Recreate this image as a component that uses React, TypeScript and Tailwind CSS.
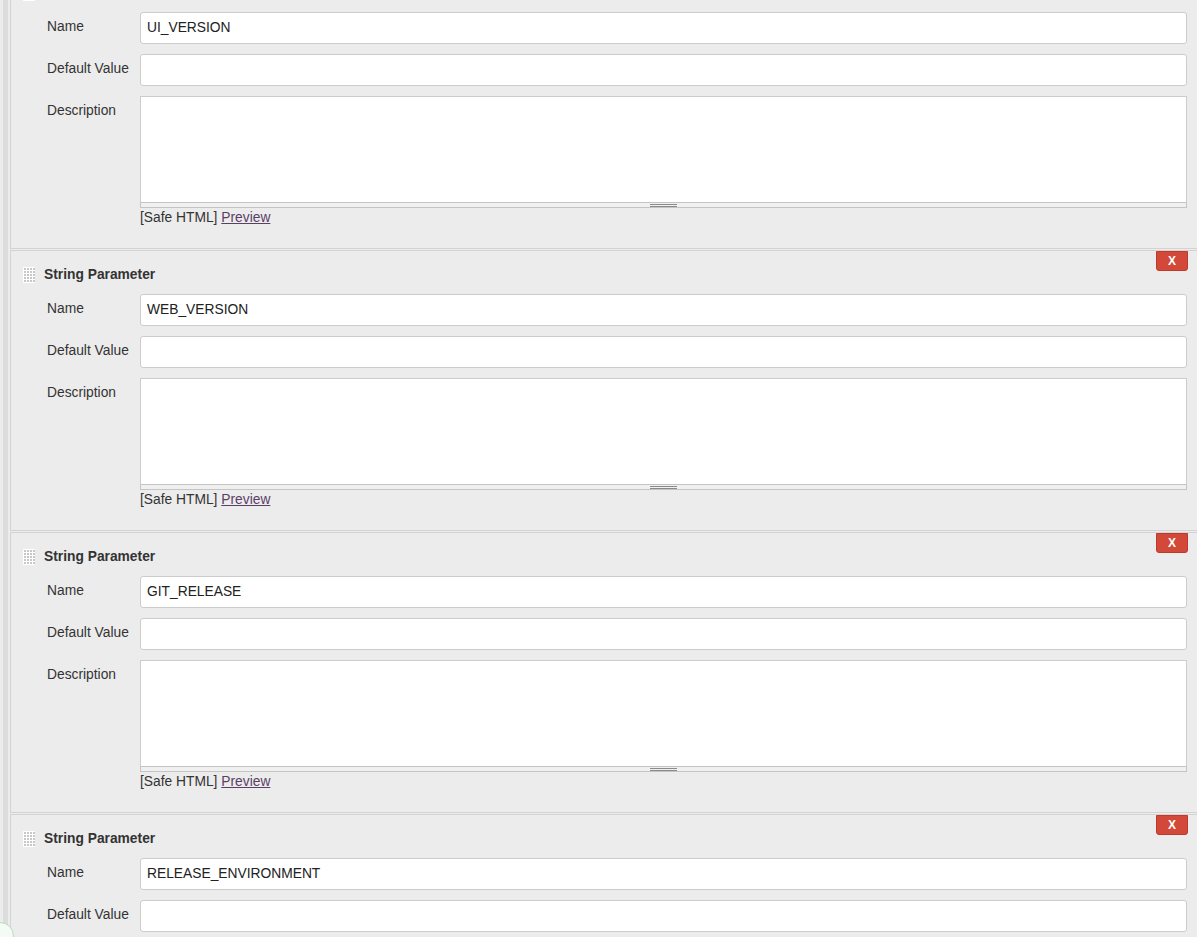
const params = ["UI_VERSION", "WEB_VERSION", "GIT_RELEASE", "RELEASE_ENVIRONMENT"];

const font = "font-['Liberation_Sans',Arial,sans-serif]";

const DragHandle = () => (
  <svg width="12" height="16" viewBox="0 0 12 16" className="shrink-0">
    <rect width="12" height="16" fill="#ffffff" />
    {[0, 1, 2, 3].map((c) =>
      [0, 1, 2, 3, 4].map((r) => (
        <rect key={`${c}-${r}`} x={1 + c * 3} y={1 + r * 3} width="2" height="2" fill="#c8c8c8" />
      ))
    )}
  </svg>
);

const Row = ({ label, value }: { label: string; value?: string }) => (
  <div className="flex">
    <div className="w-[93px] pt-[7px] text-[13.8px] leading-[16px] text-[#333]">{label}</div>
    <div className="w-[1047px] h-[32px] bg-white border border-[#ccc] rounded-[3px] pl-[6px] flex items-center text-[13.8px] text-[#222]">
      {value}
    </div>
  </div>
);

// last panel is cut by the window, so only its top rows are drawn
const Panel = ({ name, first, last }: { name: string; first?: boolean; last?: boolean }) => (
  <div
    className={`relative shrink-0 w-[1200px] h-[281px] border border-r-0 border-[#d3d3d3] bg-[#ececec] flex flex-col pl-[36px] ${
      first ? "-mt-[32px]" : "mt-[1px]"
    }`}
  >
    <div className="h-[43px] shrink-0 flex items-start pt-[16px] -ml-[24px]">
      <DragHandle />
      {!first && (
        <span className="ml-[9px] text-[13.8px] leading-[16px] font-bold text-[#333]">String Parameter</span>
      )}
    </div>
    {!first && (
      <button className="absolute top-0 left-[1145px] w-[32px] h-[20px] bg-[#d24939] border border-[#c0392b] rounded-b-[3px] text-white text-[12px] font-bold leading-none">
        X
      </button>
    )}
    <div className="flex flex-col gap-[10px] shrink-0">
      <Row label="Name" value={name} />
      <Row label="Default Value" />
      {!last && (
        <div className="flex">
          <div className="w-[93px] pt-[7px] text-[13.8px] leading-[16px] text-[#333]">Description</div>
          <div className="w-[1047px] flex flex-col">
            <div className="h-[107px] bg-white border border-[#ccc] border-b-[#c4c4c4]" />
            <div className="h-[5px] border-b border-x border-[#c4c4c4] flex justify-center bg-[#f0f0f0]">
              <div className="w-[27px] h-[3px] mt-[1px] border-t border-b border-[#8a8a8a]" />
            </div>
          </div>
        </div>
      )}
    </div>
    {!last && (
      <div className="ml-[93px] mt-[2px] text-[13.8px] leading-[16px] text-[#333]">
        [Safe HTML] <a className="underline text-[#5b3f66] cursor-pointer">Preview</a>
      </div>
    )}
  </div>
);

export default function App() {
  return (
    <div className={`relative w-[1197px] h-[937px] overflow-hidden bg-[#ececec] flex ${font}`}>
      <div className="w-[3px] shrink-0 bg-[#ececec]" />
      <div className="w-[5px] shrink-0 bg-[#dcdcdc]" />
      <div className="w-[2px] shrink-0 bg-[#ececec]" />
      <div className="flex flex-col shrink-0">
        {params.map((p, i) => (
          <Panel key={p} name={p} first={i === 0} last={i === params.length - 1} />
        ))}
      </div>
      <div className="absolute -left-[14px] top-[922px] w-[28px] h-[28px] rounded-full border border-[#b9dcb9] bg-[#f4faf4]" />
    </div>
  );
}
